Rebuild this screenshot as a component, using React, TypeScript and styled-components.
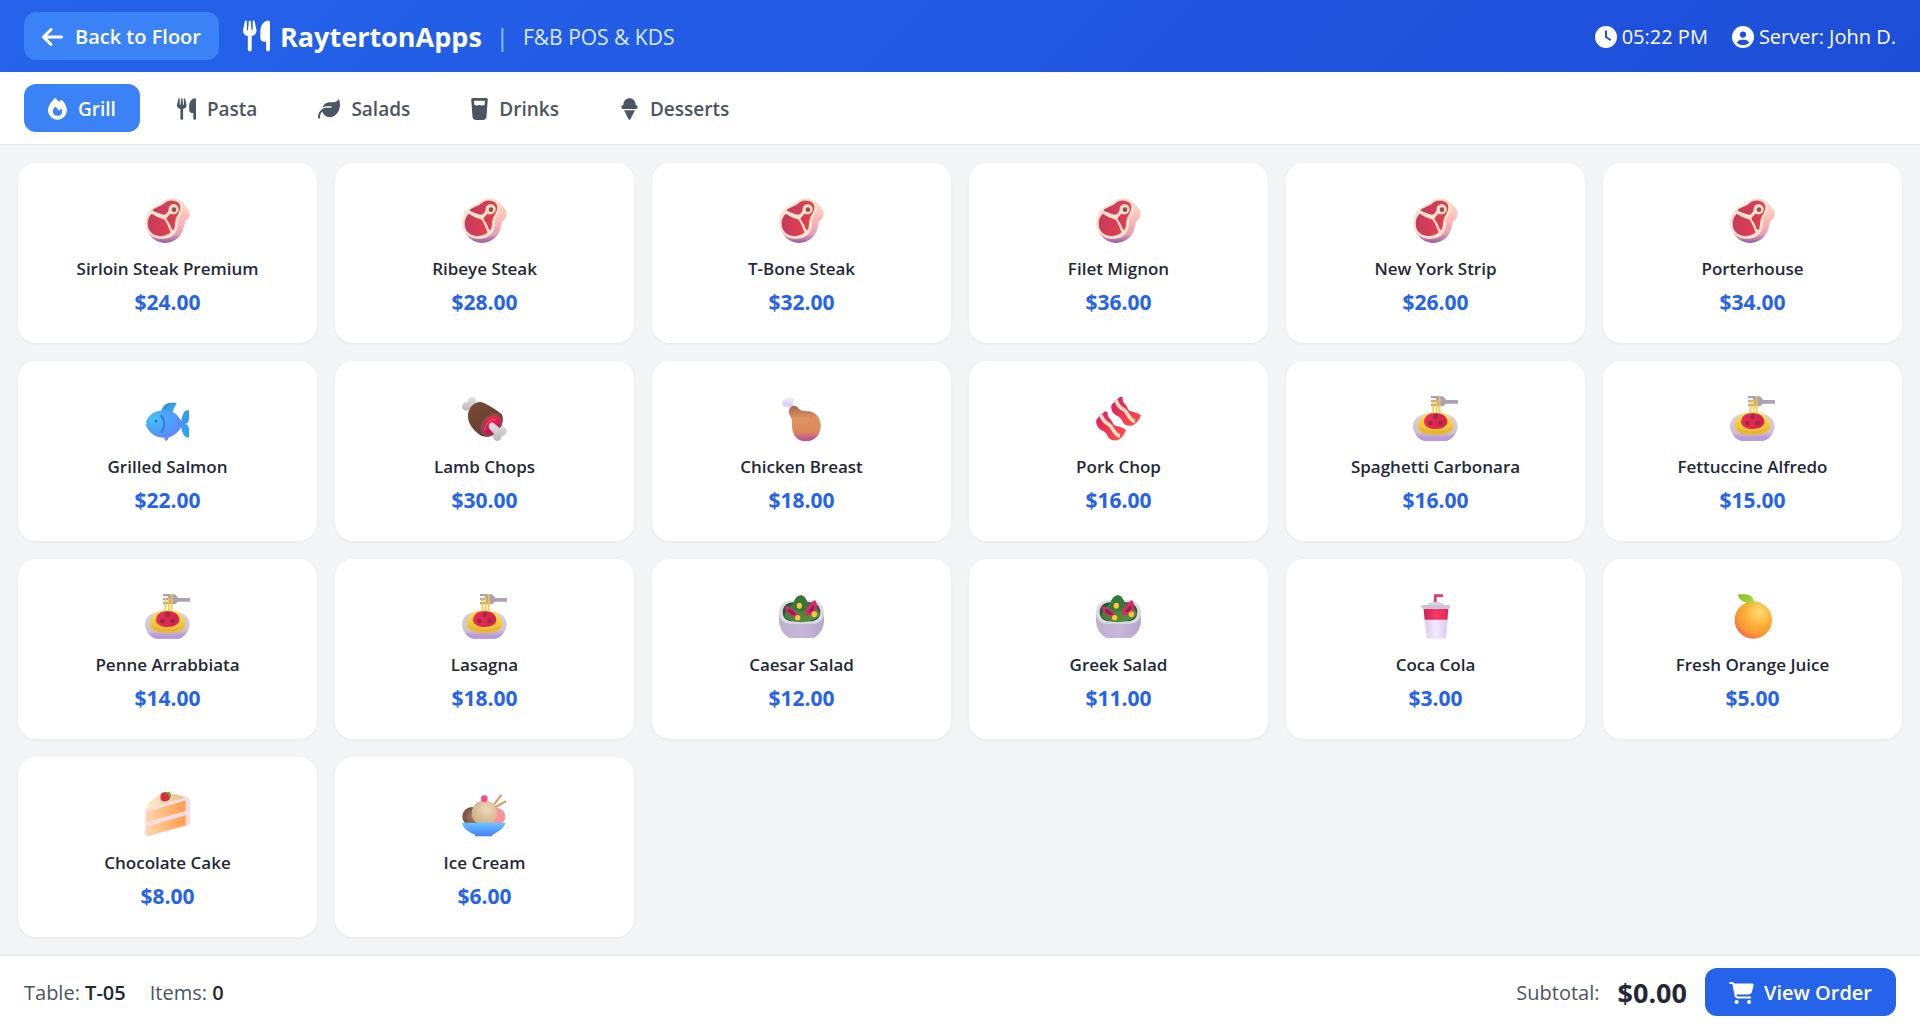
import React, { useState } from "react";
import styled, { createGlobalStyle, css } from "styled-components";
import {
  FaArrowLeft,
  FaCartShopping,
  FaCircleUser,
  FaClock,
  FaFire,
  FaGlassWater,
  FaIceCream,
  FaLeaf,
  FaUtensils,
} from "react-icons/fa6";

const GlobalStyle = createGlobalStyle`
  *, *::before, *::after { box-sizing: border-box; }
  body {
    margin: 0;
    font-family: "Segoe UI", "Open Sans", "Noto Sans", sans-serif;
    font-size: 20px;
    line-height: 28px;
    color: #1f2937;
    background: #f3f4f6;
  }
  button { font: inherit; border: 0; cursor: pointer; }
  svg { display: block; flex: none; }
`;

const Page = styled.div`
  display: flex;
  flex-direction: column;
  height: 100vh;
`;

const Header = styled.header`
  display: flex;
  align-items: center;
  justify-content: space-between;
  padding: 12px 24px;
  color: #ffffff;
  background: linear-gradient(135deg, #2563eb, #1d4ed8);
`;

const HeaderGroup = styled.div<{ $gap?: number }>`
  display: flex;
  align-items: center;
  gap: ${(p) => p.$gap ?? 24}px;
`;

/* Icon glyphs differ in width, so each slot is as wide as its glyph. */
const IconSlot = styled.span<{ $width: number }>`
  display: flex;
  svg { width: ${(p) => p.$width}px; }
`;

const BackButton = styled.button`
  display: flex;
  align-items: center;
  gap: 12px;
  height: 48px;
  padding: 2px 18px 0;
  border-radius: 12px;
  font-weight: 600;
  color: #ffffff;
  background: #3b82f6;
`;

const Brand = styled.h1`
  display: flex;
  align-items: center;
  gap: 10px;
  margin: 0;
  font-size: 27px;
  line-height: 36px;
  font-weight: 700;
`;

const BrandName = styled.span`
  padding-top: 2px;
`;

const Divider = styled.span`
  padding-top: 2px;
  font-size: 24px;
  color: #93c5fd;
`;

const Tagline = styled.span`
  padding-top: 2px;
  font-size: 21px;
  color: #dbeafe;
`;

const Status = styled.span`
  display: flex;
  align-items: center;
  gap: 5px;
  padding-top: 2px;
`;

const Tabs = styled.nav`
  display: flex;
  gap: 13px;
  padding: 12px 24px;
  background: #ffffff;
  border-bottom: 1px solid #e5e7eb;
`;

const Tab = styled.button<{ $active: boolean }>`
  display: flex;
  align-items: center;
  gap: 11px;
  height: 48px;
  padding: 2px 24px 0;
  border-radius: 12px;
  font-size: 19px;
  font-weight: 600;
  color: #4b5563;
  background: transparent;
  ${(p) =>
    p.$active &&
    css`
      color: #ffffff;
      background: #3b82f6;
    `}
`;

const Menu = styled.main`
  flex: 1;
  min-height: 0;
  overflow-y: auto;
  scrollbar-width: none;
  display: grid;
  grid-template-columns: repeat(6, minmax(0, 1fr));
  align-content: start;
  gap: 18px;
  padding: 18px;
`;

const Card = styled.button`
  display: flex;
  flex-direction: column;
  align-items: center;
  padding: 27px 18px;
  border-radius: 18px;
  color: #1f2937;
  background: #ffffff;
  box-shadow: 0 1px 3px rgba(0, 0, 0, 0.06);
`;

const Picture = styled.span`
  display: grid;
  place-items: center;
  height: 60px;
  margin-bottom: 7px;
`;

const Name = styled.span`
  margin-bottom: 7px;
  font-size: 17px;
  line-height: 24px;
  font-weight: 600;
`;

const Price = styled.span`
  font-size: 21px;
  font-weight: 700;
  color: #2563eb;
`;

const Footer = styled.footer`
  display: flex;
  align-items: center;
  justify-content: space-between;
  padding: 12px 24px 11px;
  background: #ffffff;
  border-top: 1px solid #e5e7eb;
`;

const FooterGroup = styled.div<{ $gap: number }>`
  display: flex;
  align-items: center;
  gap: ${(p) => p.$gap}px;
`;

const Label = styled.span`
  padding-top: 2px;
  color: #4b5563;
`;

const Value = styled.strong`
  font-weight: 600;
  color: #1f2937;
`;

const Total = styled.strong`
  padding-top: 2px;
  font-size: 27px;
  line-height: 36px;
  font-weight: 700;
`;

const OrderButton = styled.button`
  display: flex;
  align-items: center;
  gap: 10px;
  height: 48px;
  padding: 2px 24px 0;
  border-radius: 12px;
  font-weight: 600;
  color: #ffffff;
  background: #2563eb;
`;

type StopList = [number, string][];

function Linear({ id, stops, to = "v" }: { id: string; stops: StopList; to?: "v" | "h" | "d" }) {
  return (
    <linearGradient id={id} x1="0" y1="0" x2={to === "v" ? 0 : 1} y2={to === "h" ? 0 : 1}>
      {stops.map(([o, c]) => (
        <stop key={o} offset={o} stopColor={c} />
      ))}
    </linearGradient>
  );
}

function Radial({ id, stops, cx = 0.5, cy = 0.5, r = 0.6 }: { id: string; stops: StopList; cx?: number; cy?: number; r?: number }) {
  return (
    <radialGradient id={id} cx={cx} cy={cy} r={r}>
      {stops.map(([o, c]) => (
        <stop key={o} offset={o} stopColor={c} />
      ))}
    </radialGradient>
  );
}

type Dish = "steak" | "fish" | "meat" | "drumstick" | "bacon" | "spaghetti" | "salad" | "cup" | "orange" | "cake" | "icecream";

const drawings: Record<Dish, { box: string; art: React.ReactNode }> = {
  steak: {
    box: "45 22 135 135",
    art: (
      <>
        <defs>
          <Linear id="steakSide" stops={[[0, "#fde3cf"], [0.5, "#fbb8b5"], [0.8, "#e6a0b4"], [1, "#9659a8"]]} />
          <Linear id="steakMeat" to="h" stops={[[0, "#c43a60"], [1, "#e3404f"]]} />
        </defs>
        <path fill="url(#steakSide)" d="M132 24c20 2 34 16 46 38 4 14-2 23-12 30-4 10-4 27-15 42-14 18-37 27-60 21-18-5-30-17-36-28L98 36z" />
        <path fill="#fde3cb" d="M98 34c8-6 18-12 33-11 17 1 28 12 28 27 0 13-9 22-13 34-3 13 0 28-10 42-11 15-29 20-48 18-26-3-43-22-43-47 0-23 13-45 33-51 9-3 14-6 20-12z" />
        <path fill="url(#steakMeat)" d="M98 42c9-8 19-13 31-12 14 1 22 9 22 20 0 14-10 24-14 36-3 14-1 25-7 33l-5-5c-4-10-9-21-16-29 2-6 7-9 12-16 2 1 6 2 10 2 9 0 15-7 15-15 0-9-7-15-15-15s-15 6-15 14c0 8-7 17-14 17-12-2-24-8-34-12 3-8 13-9 30-18z" />
        <path fill="url(#steakMeat)" d="M65 69c12 7 25 14 39 18 8 11 12 25 18 38-9 9-22 12-34 11-22-1-35-17-35-38 0-11 5-22 12-29z" />
        <circle cx="131" cy="57" r="11" fill="#f9dccc" />
        <circle cx="132" cy="57" r="7" fill="#925252" />
      </>
    ),
  },
  fish: {
    box: "45 16 135 135",
    art: (
      <>
        <defs>
          <Radial id="fishBody" cx={0.25} cy={0.3} r={0.9} stops={[[0, "#48c0fb"], [0.5, "#4ba0fb"], [1, "#6a7cff"]]} />
          <Linear id="fishFin" to="d" stops={[[0, "#278bc8"], [1, "#43b4fa"]]} />
        </defs>
        <path fill="url(#fishFin)" d="M94 62c3-15 13-26 28-26h14c4 0 5 4 2 7-6 7-8 15-10 23z" />
        <path fill="#6688fa" d="M92 136h26l-5 11c-2 4-6 4-8 0l-2-6z" />
        <path fill="#329cea" d="M151 100c5-12 4-25 11-35 4-5 10-6 15-6v25c0 9-4 15-12 16z" />
        <path fill="#31a2ef" d="M151 100h14c8 1 12 7 12 15v26c-13 0-20-11-22-25z" />
        <path fill="url(#fishBody)" d="M47 95c8-23 30-36 57-36 25 0 44 15 54 41-8 24-30 41-54 41-27 0-45-13-54-33l-5-6 6-2z" />
        <circle cx="78" cy="92" r="3" fill="#1b3658" />
        <path fill="none" stroke="#3f75dc" strokeWidth="6" strokeLinecap="round" d="M94 76c12 13 12 33 1 47" />
      </>
    ),
  },
  meat: {
    box: "51 16 135 135",
    art: (
      <>
        <defs>
          <Linear id="meatSkin" to="d" stops={[[0, "#7b4c38"], [1, "#57382b"]]} />
          <Linear id="meatCut" to="d" stops={[[0, "#fb3145"], [1, "#b00a5a"]]} />
          <Linear id="meatBone" stops={[[0, "#e5e2e7"], [1, "#b8b5bd"]]} />
        </defs>
        <path fill="url(#meatBone)" d="M68 34c0-10 5-16 13-16 9 0 14 9 11 17l-3 12-19 11c-10 5-19-1-19-10 0-8 8-14 17-14z" />
        <path fill="url(#meatSkin)" d="M69 69c3-18 17-34 37-36 20 5 60 32 64 38 8 12 2 37-13 53-11 12-31 18-47 12-22-13-45-40-41-67z" />
        <ellipse cx="139" cy="102" rx="29" ry="39" transform="rotate(38 139 102)" fill="#864a48" />
        <ellipse cx="140" cy="103" rx="22" ry="32" transform="rotate(38 140 103)" fill="url(#meatCut)" />
        <path fill="none" stroke="#f15a71" strokeWidth="3" d="M120 119c-3-16 16-35 33-32" />
        <path fill="url(#meatBone)" d="M132 103c1-7 9-10 15-5l17 15c5-8 20-5 21 7 1 10-9 15-15 16 0 10-8 17-17 14-9-3-11-13-6-20l-13-15c-3-4-3-8-2-12z" />
      </>
    ),
  },
  drumstick: {
    box: "57 16 135 135",
    art: (
      <>
        <defs>
          <Linear id="legBone" stops={[[0, "#f5f2fb"], [1, "#cab4ec"]]} />
          <Linear id="legMeat" stops={[[0, "#a7644c"], [0.35, "#dc9463"], [0.72, "#dd8858"], [1, "#b54ba0"]]} />
        </defs>
        <path fill="url(#legBone)" d="M81 25c2-8 11-10 16-4 6 4 6 12 0 17l7 14-13 9-8-15c-8 5-17 0-17-9 0-8 7-13 15-12z" />
        <path fill="url(#legMeat)" d="M92 51c6-9 17-7 23 1 6 9 18 9 32 10 20 2 35 20 35 43 0 28-19 47-44 47-26 0-42-20-42-47 0-15 0-18-4-26-5-8-9-19 0-28z" />
        <g fill="#f8765e">
          <circle cx="152" cy="83" r="4" />
          <circle cx="164" cy="94" r="4" />
          <circle cx="148" cy="98" r="4" />
        </g>
      </>
    ),
  },
  bacon: {
    box: "54 16 135 135",
    art: (
      <>
        <defs>
          <Linear id="baconEdge" to="d" stops={[[0, "#cf236d"], [0.45, "#ee3158"], [1, "#ff5545"]]} />
          <path id="baconStrip" d="M126 18l8 2c-2 18 11 20 14 31 5 17 24 8 41 23-8 20-21 34-38 31-19-2-16-21-29-27-13-6-25-16-22-35 10-12 20-18 26-25z" />
        </defs>
        <use href="#baconStrip" fill="url(#baconEdge)" />
        <path fill="none" stroke="#ffe0bb" strokeWidth="11" d="M114 29c4 15 11 22 24 29 13 8 15 31 33 34" />
        <use href="#baconStrip" x="-45" y="44" fill="url(#baconEdge)" />
        <path fill="none" stroke="#ffe0bb" strokeWidth="11" d="M69 73c4 15 11 22 24 29 13 8 15 31 33 34" />
      </>
    ),
  },
  spaghetti: {
    box: "54 16 135 135",
    art: (
      <>
        <defs>
          <Linear id="pastaPlate" stops={[[0, "#d9d2df"], [0.7, "#ccc1d5"], [1, "#ac84d8"]]} />
          <Linear id="pastaYellow" stops={[[0, "#ffe34b"], [1, "#e7b52f"]]} />
          <Linear id="pastaSauce" to="h" stops={[[0, "#e92c55"], [1, "#d5204e"]]} />
        </defs>
        <path fill="url(#pastaPlate)" d="M54 106c0-21 20-37 45-37h44c25 0 45 16 45 37 0 14-8 29-21 38-5 4-11 6-18 6H93c-7 0-13-2-18-6-13-9-21-24-21-38z" />
        <path fill="#b79bdc" d="M62 130c10 9 24 12 38 12h42c14 0 28-3 38-12-6 10-15 20-30 20H92c-15 0-24-10-30-20z" />
        <path fill="url(#pastaYellow)" d="M68 107c0-20 16-38 38-41h31c22 3 38 21 38 41 0 17-20 26-53 26s-54-9-54-26z" />
        <path fill="none" stroke="#dba82b" strokeWidth="2" d="M76 112c12 16 80 18 92 0" />
        <path fill="url(#pastaSauce)" d="M87 94c1-18 15-27 34-27 22 0 36 11 36 28-2 13-16 20-36 20-19 0-33-8-34-21z" />
        <path fill="#aba0b4" d="M108 16l36 1 10 11h35v11h-36l-9 8h-36v-7h15v-5h-15v-7h15v-5h-15z" />
        <path fill="none" stroke="#f5ca36" strokeWidth="5" d="M115 29v39M125 27v40M134 17v50" />
        <g fill="#8f303c">
          <circle cx="122" cy="78" r="7" />
          <circle cx="106" cy="97" r="7" />
          <circle cx="137" cy="97" r="7" />
        </g>
      </>
    ),
  },
  salad: {
    box: "57 26 135 135",
    art: (
      <>
        <defs>
          <Linear id="saladBowl" to="h" stops={[[0, "#beb1ca"], [0.5, "#c7b7da"], [1, "#b7a6cc"]]} />
          <Linear id="saladLeaf" to="d" stops={[[0, "#2f7a42"], [1, "#5a9432"]]} />
        </defs>
        <path fill="url(#saladBowl)" d="M57 82h135v22c0 24-12 44-31 54H88c-19-10-31-30-31-54z" />
        <path fill="#dedae4" d="M57 82c0-22 16-37 40-37h55c24 0 40 15 40 37 0 18-12 33-36 33H93c-24 0-36-15-36-33z" />
        <path fill="#27583e" d="M68 80c0-18 14-29 33-29h47c19 0 33 11 33 29 0 16-10 28-30 28H98c-20 0-30-12-30-28z" />
        <path fill="url(#saladLeaf)" d="M73 93c4-21 14-29 25-36 6-16 13-28 26-27 16 2 14 22 28 30 14 3 25 14 28 27-13 26-83 34-107 6z" />
        <path fill="#38763d" d="M100 72c2-23 9-41 24-41 14 1 13 18 27 28-8 19-29 24-51 13z" />
        <path fill="#d52c69" d="M75 63c17 1 35 14 43 31-21 5-43-7-43-31zM165 44c10 14 9 32-2 39-9 7-19 7-29 7 0-18 12-34 31-46z" />
        <path fill="#8e1f4e" d="M84 71c13 2 19 9 25 18-16 0-25-6-25-18zM162 60c5 11-5 21-17 22 2-8 8-16 17-22z" />
        <g fill="#ffc738">
          <ellipse cx="118" cy="61" rx="8" ry="9" />
          <ellipse cx="163" cy="87" rx="8" ry="9" />
          <ellipse cx="113" cy="97" rx="8" ry="8" />
        </g>
      </>
    ),
  },
  cup: {
    box: "0 0 135 135",
    art: (
      <>
        <defs>
          <Linear id="cupBody" to="h" stops={[[0, "#d9c6ef"], [0.5, "#f3eafd"], [1, "#d8c4f4"]]} />
          <Linear id="cupBand" to="h" stops={[[0, "#c92556"], [0.5, "#fb3761"], [1, "#de2957"]]} />
        </defs>
        <path fill="none" stroke="#e23a61" strokeWidth="8" d="M67 29V5h23" />
        <path fill="#d6d7dd" d="M43 35c2-7 8-11 17-11h17c9 0 15 4 17 11z" />
        <path fill="url(#cupBody)" d="M31 41h76l-8 90c-1 4-57 4-58 0z" />
        <path fill="url(#cupBand)" d="M32 45h74l-3 32H35z" />
        <rect x="25" y="33" width="86" height="11" rx="4" fill="#cdc3d5" />
      </>
    ),
  },
  orange: {
    box: "0 0 135 135",
    art: (
      <>
        <defs>
          <Radial id="orangeFruit" cx={0.65} cy={0.3} r={0.75} stops={[[0, "#ffdf72"], [0.5, "#faae38"], [0.8, "#f79632"], [1, "#f8674b"]]} />
          <Linear id="orangeLeaf" to="d" stops={[[0, "#80bd2c"], [1, "#b5db37"]]} />
        </defs>
        <circle cx="70" cy="78" r="56" fill="url(#orangeFruit)" />
        <path fill="url(#orangeLeaf)" d="M24 1h21c16 0 28 11 27 29C51 30 26 22 24 1z" />
      </>
    ),
  },
  cake: {
    box: "45 34 135 135",
    art: (
      <>
        <defs>
          <Linear id="cakeSponge" to="h" stops={[[0, "#ffd4a7"], [1, "#ff9c48"]]} />
          <Linear id="cakeTop" to="h" stops={[[0, "#fff0c9"], [1, "#e7bb86"]]} />
        </defs>
        <path fill="#fbdadd" d="M46 87l66-25 60-9c5 0 8 3 8 8v66c0 4-3 7-7 8L55 167c-6 2-10-1-10-7z" />
        <path fill="url(#cakeTop)" d="M47 85c4-16 30-37 50-48 23-2 55 5 76 17l-7 6z" />
        <path fill="url(#cakeSponge)" d="M50 93l118-35v33L50 124zM50 138l118-34v29L54 165c-3 0-4-1-4-4z" />
        <path fill="none" stroke="#fadedf" strokeWidth="9" d="M48 130l121-34M48 89l123-35v77" />
        <path fill="#df2940" d="M93 41c5-7 14-9 23-4 7 4 7 12 2 19-5 6-14 8-21 5-6-3-7-13-4-20z" />
        <path fill="#66a42e" d="M101 35l8-4 5 3 7 1v6l3 7-8 1-2-8z" />
      </>
    ),
  },
  icecream: {
    box: "996 34 135 135",
    art: (
      <>
        <defs>
          <Linear id="iceBowl" stops={[[0, "#68c8ff"], [0.5, "#58a2ff"], [1, "#477cf9"]]} />
          <Radial id="iceVanilla" cx={0.6} cy={0.35} stops={[[0, "#efdab9"], [1, "#cfb28c"]]} />
          <Radial id="iceChoco" stops={[[0, "#a77a66"], [1, "#684536"]]} />
        </defs>
        <path fill="none" stroke="#d29963" strokeWidth="6" strokeLinecap="round" d="M1091 73l22-29M1097 79l29-16" />
        <circle cx="1026" cy="108" r="29" fill="url(#iceChoco)" />
        <circle cx="1099" cy="108" r="27" fill="#f7929d" />
        <circle cx="1063" cy="97" r="38" fill="url(#iceVanilla)" />
        <path fill="url(#iceBowl)" d="M996 126h130c0 12-20 28-39 36v5h-52v-5c-19-7-37-21-39-36z" />
        <circle cx="1063" cy="54" r="10" fill="#f24b88" />
      </>
    ),
  },
};

function DishPicture({ kind }: { kind: Dish }) {
  const { box, art } = drawings[kind];
  return (
    <Picture>
      <svg width="45" height="45" viewBox={box} aria-hidden="true">
        {art}
      </svg>
    </Picture>
  );
}

const tabs = [
  { name: "Grill", Icon: FaFire, width: 19 },
  { name: "Pasta", Icon: FaUtensils, width: 19 },
  { name: "Salads", Icon: FaLeaf, width: 22 },
  { name: "Drinks", Icon: FaGlassWater, width: 17 },
  { name: "Desserts", Icon: FaIceCream, width: 19 },
];

const items: { name: string; price: number; kind: Dish }[] = [
  { name: "Sirloin Steak Premium", price: 24, kind: "steak" },
  { name: "Ribeye Steak", price: 28, kind: "steak" },
  { name: "T-Bone Steak", price: 32, kind: "steak" },
  { name: "Filet Mignon", price: 36, kind: "steak" },
  { name: "New York Strip", price: 26, kind: "steak" },
  { name: "Porterhouse", price: 34, kind: "steak" },
  { name: "Grilled Salmon", price: 22, kind: "fish" },
  { name: "Lamb Chops", price: 30, kind: "meat" },
  { name: "Chicken Breast", price: 18, kind: "drumstick" },
  { name: "Pork Chop", price: 16, kind: "bacon" },
  { name: "Spaghetti Carbonara", price: 16, kind: "spaghetti" },
  { name: "Fettuccine Alfredo", price: 15, kind: "spaghetti" },
  { name: "Penne Arrabbiata", price: 14, kind: "spaghetti" },
  { name: "Lasagna", price: 18, kind: "spaghetti" },
  { name: "Caesar Salad", price: 12, kind: "salad" },
  { name: "Greek Salad", price: 11, kind: "salad" },
  { name: "Coca Cola", price: 3, kind: "cup" },
  { name: "Fresh Orange Juice", price: 5, kind: "orange" },
  { name: "Chocolate Cake", price: 8, kind: "cake" },
  { name: "Ice Cream", price: 6, kind: "icecream" },
];

export default function App() {
  const [active, setActive] = useState("Grill");

  return (
    <Page>
      <GlobalStyle />
      <Header>
        <HeaderGroup>
          <BackButton type="button">
            <IconSlot $width={21}>
              <FaArrowLeft size={24} />
            </IconSlot>
            Back to Floor
          </BackButton>
          <HeaderGroup $gap={14}>
            <Brand>
              <IconSlot $width={27}>
                <FaUtensils size={32} />
              </IconSlot>
              <BrandName>RaytertonApps</BrandName>
            </Brand>
            <Divider>|</Divider>
            <Tagline>F&amp;B POS &amp; KDS</Tagline>
          </HeaderGroup>
        </HeaderGroup>
        <HeaderGroup>
          <Status>
            <FaClock size={22} />
            05:22 PM
          </Status>
          <Status>
            <FaCircleUser size={22} />
            Server: John D.
          </Status>
        </HeaderGroup>
      </Header>
      <Tabs>
        {tabs.map(({ name, Icon, width }) => (
          <Tab key={name} type="button" $active={name === active} onClick={() => setActive(name)}>
            <IconSlot $width={width}>
              <Icon size={22} />
            </IconSlot>
            {name}
          </Tab>
        ))}
      </Tabs>
      <Menu>
        {items.map((item) => (
          <Card key={item.name} type="button">
            <DishPicture kind={item.kind} />
            <Name>{item.name}</Name>
            <Price>${item.price.toFixed(2)}</Price>
          </Card>
        ))}
      </Menu>
      <Footer>
        <FooterGroup $gap={24}>
          <Label>
            Table: <Value>T-05</Value>
          </Label>
          <Label>
            Items: <Value>0</Value>
          </Label>
        </FooterGroup>
        <FooterGroup $gap={18}>
          <Label>Subtotal:</Label>
          <Total>$0.00</Total>
          <OrderButton type="button">
            <IconSlot $width={25}>
              <FaCartShopping size={22} />
            </IconSlot>
            View Order
          </OrderButton>
        </FooterGroup>
      </Footer>
    </Page>
  );
}
